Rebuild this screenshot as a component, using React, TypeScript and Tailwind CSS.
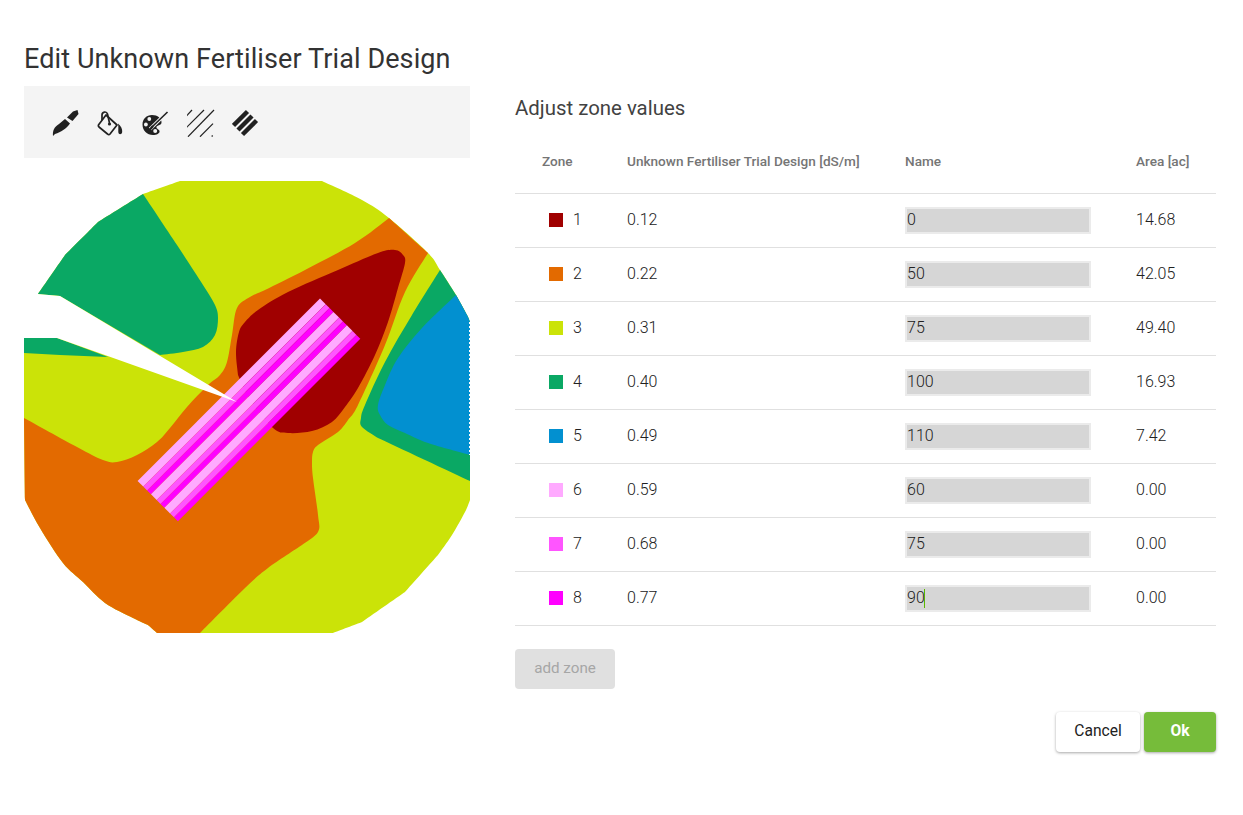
import React from "react";

const zones = [
  { id: 1, color: "bg-[#a00000]", value: "0.12", name: "0", area: "14.68" },
  { id: 2, color: "bg-[#e36a00]", value: "0.22", name: "50", area: "42.05" },
  { id: 3, color: "bg-[#cbe308]", value: "0.31", name: "75", area: "49.40" },
  { id: 4, color: "bg-[#0aa864]", value: "0.40", name: "100", area: "16.93" },
  { id: 5, color: "bg-[#0290d0]", value: "0.49", name: "110", area: "7.42" },
  { id: 6, color: "bg-[#ffaaff]", value: "0.59", name: "60", area: "0.00" },
  { id: 7, color: "bg-[#ff55ff]", value: "0.68", name: "75", area: "0.00" },
  { id: 8, color: "bg-[#ff00ff]", value: "0.77", name: "90", area: "0.00" },
];

const stripeBands = [0, 19, 38];

type Pt = [number, number];

// smooth line through the points, for the contour edges of the map
function spline(pts: Pt[]) {
  let d = `L${pts[0][0]} ${pts[0][1]} `;
  for (let i = 0; i < pts.length - 1; i++) {
    const p0 = pts[i - 1] || pts[i];
    const p1 = pts[i];
    const p2 = pts[i + 1];
    const p3 = pts[i + 2] || p2;
    const c1x = p1[0] + (p2[0] - p0[0]) / 6;
    const c1y = p1[1] + (p2[1] - p0[1]) / 6;
    const c2x = p2[0] - (p3[0] - p1[0]) / 6;
    const c2y = p2[1] - (p3[1] - p1[1]) / 6;
    d += `C${c1x} ${c1y} ${c2x} ${c2y} ${p2[0]} ${p2[1]} `;
  }
  return d;
}

const shape = (...parts: Pt[][]) => "M" + parts.map(spline).join("").slice(1) + "Z";

const edgeBottomLeft: Pt[] = [[157, 633], [148, 625]];
const edgeLowerArc: Pt[] = [[148, 625], [133, 618], [105, 603], [83, 582], [63, 563], [40, 528], [25, 500]];

const fieldPath = shape(
  [[24, 338], [38, 294]],
  [[38, 294], [65, 255]],
  [[65, 255], [98, 222]],
  [[98, 222], [143, 194]],
  [[143, 194], [180, 181]],
  [[322, 181], [362, 200], [389, 218], [428, 253], [440, 270], [456, 295], [467, 315], [470, 322]],
  [[470, 500], [465, 512], [452, 535], [438, 555]],
  [[438, 555], [405, 592]],
  [[405, 592], [362, 622]],
  [[362, 622], [333, 633]],
  edgeBottomLeft,
  edgeLowerArc,
  [[25, 500], [24, 418]]
);

const greenLeftPath = shape(
  [[143, 194], [177, 245], [203, 285], [215, 305], [218, 318], [215, 335], [203, 347], [183, 352], [160, 355]],
  [[60, 296], [38, 294]],
  [[38, 294], [65, 255]],
  [[65, 255], [98, 222]],
  [[98, 222], [143, 194]]
);

const orangePath = shape(
  [[24, 418], [77, 447], [103, 460], [117, 462], [137, 455], [157, 442], [170, 428], [187, 407], [208, 385], [220, 375], [227, 362], [232, 335], [237, 308], [250, 297], [265, 290], [305, 270], [355, 243], [389, 218]],
  [[389, 218], [428, 253]],
  [[428, 253], [405, 292], [385, 345], [358, 405], [348, 420], [338, 432], [318, 445], [313, 452], [312, 462], [313, 478], [318, 515], [318, 532], [302, 545]],
  [[302, 545], [268, 568], [245, 588], [200, 633]],
  [[200, 633], [157, 633]],
  edgeBottomLeft,
  edgeLowerArc,
  [[25, 500], [24, 418]]
);

const redPath = shape([
  [238, 375], [236, 352], [239, 332], [245, 322], [258, 310], [288, 292], [338, 270], [378, 253], [395, 250], [403, 255], [405, 263], [398, 288], [388, 322], [375, 355], [358, 388], [345, 407], [332, 422], [312, 431], [288, 433], [273, 428], [250, 400], [238, 375],
]);

const greenRightPath = shape(
  [[440, 270], [456, 295], [467, 315], [470, 322]],
  [[470, 481], [378, 438]],
  [[378, 438], [362, 427], [361, 418], [365, 405], [385, 362], [412, 315], [440, 270]]
);

const bluePath = shape(
  [[456, 295], [467, 315], [470, 322]],
  [[470, 455], [428, 443], [405, 433], [388, 425], [380, 415], [378, 405], [385, 385], [398, 358], [422, 328], [456, 295]]
);

function BrushIcon() {
  return (
    <svg viewBox="0 0 28 28" className="w-[28px] h-[28px]" fill="#212121">
      <path d="M1 27 C0.5 22 2 18 7 15 L13 10 L18 14.5 C14 20 9 23 3 25 Z" />
      <path d="M15 8.5 L21 2.5 L25.5 1 L26.5 5 L20.5 12 Z" />
    </svg>
  );
}

function BucketIcon() {
  return (
    <svg viewBox="0 0 28 28" className="w-[28px] h-[28px]" fill="none" stroke="#212121" strokeWidth="1.7">
      <path d="M9 6 L20 16 L13 25 C12.3 25.8 11.3 25.8 10.5 25 L2 18 C1.3 17.3 1.2 16.4 1.8 15.6 Z" strokeLinejoin="round" />
      <path d="M5 11 L5 6 C5 2.5 9.5 2 10.5 5 L12.5 14" />
      <circle cx="12.5" cy="15" r="1.6" fill="#212121" stroke="none" />
      <path d="M21 14.5 C24 17 25.5 20 25.2 23 C24.8 26 21.5 26 21.3 23 C21.2 20 21.6 18 21 14.5 Z" fill="#212121" stroke="none" />
    </svg>
  );
}

function PaletteIcon() {
  return (
    <svg viewBox="0 0 28 28" className="w-[28px] h-[28px]">
      <path
        d="M10 6 C4.5 6 0.5 10 0.5 15.5 C0.5 21.5 5 26 11 26 C14.5 26 18 24.5 17.5 22 C17 20 14 20 14.5 18 C15 16 19 16.5 19.5 14 C20 9.5 15.5 6 10 6 Z"
        fill="#212121"
      />
      <circle cx="7.3" cy="10" r="1.9" fill="#f4f4f4" />
      <circle cx="3.9" cy="15.5" r="1.9" fill="#f4f4f4" />
      <circle cx="13.2" cy="22" r="2" fill="#f4f4f4" />
      <path d="M25.5 3 L8 20" stroke="#f4f4f4" strokeWidth="3.4" />
      <path d="M25.5 3 L10 18" stroke="#212121" strokeWidth="1.6" />
      <path d="M11 17 L7.5 21" stroke="#212121" strokeWidth="2.2" />
    </svg>
  );
}

function ThinLinesIcon() {
  return (
    <svg viewBox="0 0 28 28" className="w-[28px] h-[28px]" stroke="#212121" strokeWidth="1.2" fill="none">
      <path d="M-0.7 7 L5 1" />
      <path d="M-0.7 18.7 L17 1" />
      <path d="M1 27.7 L27 1" />
      <path d="M13 27.7 L26 14.7" />
      <path d="M24.7 27.5 L25.7 26.5" />
    </svg>
  );
}

function ThickLinesIcon() {
  return (
    <svg viewBox="0 0 28 28" className="w-[28px] h-[28px]" stroke="#212121" strokeWidth="4.5" fill="none">
      <path d="M1.5 16.5 L15.5 2.5" />
      <path d="M6 21 L20 7" />
      <path d="M10.5 25.5 L24.5 11.5" />
    </svg>
  );
}

function TrialMap() {
  return (
    <svg viewBox="24 181 446 452" className="block w-[446px] h-[452px] mt-[23px]">
      <path d={fieldPath} fill="#cbe308" />
      <path d={greenLeftPath} fill="#0aa864" />
      <polygon fill="#0aa864" points="24,338 57,338 108,357 60,355 24,353" />
      <path d={orangePath} fill="#e36a00" />
      <path d={redPath} fill="#a00000" />
      <path d={greenRightPath} fill="#0aa864" />
      <path d={bluePath} fill="#0290d0" />
      <path d="M469.5 322 L469.5 455" stroke="#ffffff" strokeWidth="1" strokeDasharray="2 2" />
      {/* trial strip */}
      <g transform="translate(320 298.5) rotate(45)">
        {stripeBands.map((x) => (
          <g key={x}>
            <rect x={x} y="0" width="8" height="258" fill="#ffaaff" />
            <rect x={x + 8} y="0" width="5.5" height="258" fill="#ff55ff" />
            <rect x={x + 13.5} y="0" width="5.5" height="258" fill="#ff00ff" />
          </g>
        ))}
      </g>
      {/* gap in the field, lies over the strip */}
      <polygon fill="#ffffff" points="24,294 38,294 60,296 237,402 57,338 24,338" />
    </svg>
  );
}

export default function App() {
  return (
    <div className="w-[1243px] h-[815px] bg-white font-['Roboto',sans-serif] pl-[24px] pr-[27px] overflow-hidden">
      <h1 className="h-[86px] pt-[41px] text-[27px] leading-[36px] text-[#333333] tracking-[0.1px]">
        Edit Unknown Fertiliser Trial Design
      </h1>
      <div className="flex flex-row gap-[45px]">
        <div className="w-[446px]">
          <div className="h-[72px] bg-[#f4f4f4] flex items-center gap-[17px] pl-[28px] pt-[2px]">
            <BrushIcon />
            <BucketIcon />
            <PaletteIcon />
            <ThinLinesIcon />
            <ThickLinesIcon />
          </div>
          <TrialMap />
        </div>
        <div className="w-[701px]">
          <h2 className="h-[43px] pt-[2px] flex items-center text-[20.4px] text-[#424242]">Adjust zone values</h2>
          <table className="w-full table-fixed">
            <thead>
              <tr className="h-[64px] border-b border-[#e0e0e0] text-left text-[13.6px] text-[#757575]">
                <th className="w-[112px] pl-[27px] font-medium">Zone</th>
                <th className="w-[278px] font-medium">Unknown Fertiliser Trial Design [dS/m]</th>
                <th className="w-[231px] font-medium">Name</th>
                <th className="font-medium">Area [ac]</th>
              </tr>
            </thead>
            <tbody>
              {zones.map((zone) => (
                <tr key={zone.id} className="h-[54px] border-b border-[#e0e0e0] text-[16px] font-light text-[#212121]">
                  <td className="pl-[34px]">
                    <div className="flex items-center gap-[10px]">
                      <span className={`w-[14px] h-[14px] ${zone.color}`}></span>
                      <span>{zone.id}</span>
                    </div>
                  </td>
                  <td>{zone.value}</td>
                  <td>
                    <div className="w-[186px] h-[27px] flex items-center bg-[#d6d6d6] border-2 border-[#ebebeb]">
                      <span>{zone.name}</span>
                      {zone.id === 8 && <span className="w-px h-[19px] -ml-px bg-[#5cb800]"></span>}
                    </div>
                  </td>
                  <td>{zone.area}</td>
                </tr>
              ))}
            </tbody>
          </table>
          <button className="block mt-[23px] w-[100px] h-[40px] rounded-[4px] bg-[#e0e0e0] text-[15.2px] text-[#a6a6a6]">
            add zone
          </button>
          <div className="flex justify-end gap-[4px] mt-[23px]">
            <button className="w-[84px] h-[40px] pt-px rounded-[4px] bg-white text-[15.6px] text-[#212121] shadow-[0_1px_3px_rgba(0,0,0,0.35)]">
              Cancel
            </button>
            <button className="w-[72px] h-[40px] pt-px rounded-[4px] bg-[#76bc3a] text-[15.6px] font-bold text-white shadow-[0_1px_3px_rgba(0,0,0,0.35)]">
              Ok
            </button>
          </div>
        </div>
      </div>
    </div>
  );
}
